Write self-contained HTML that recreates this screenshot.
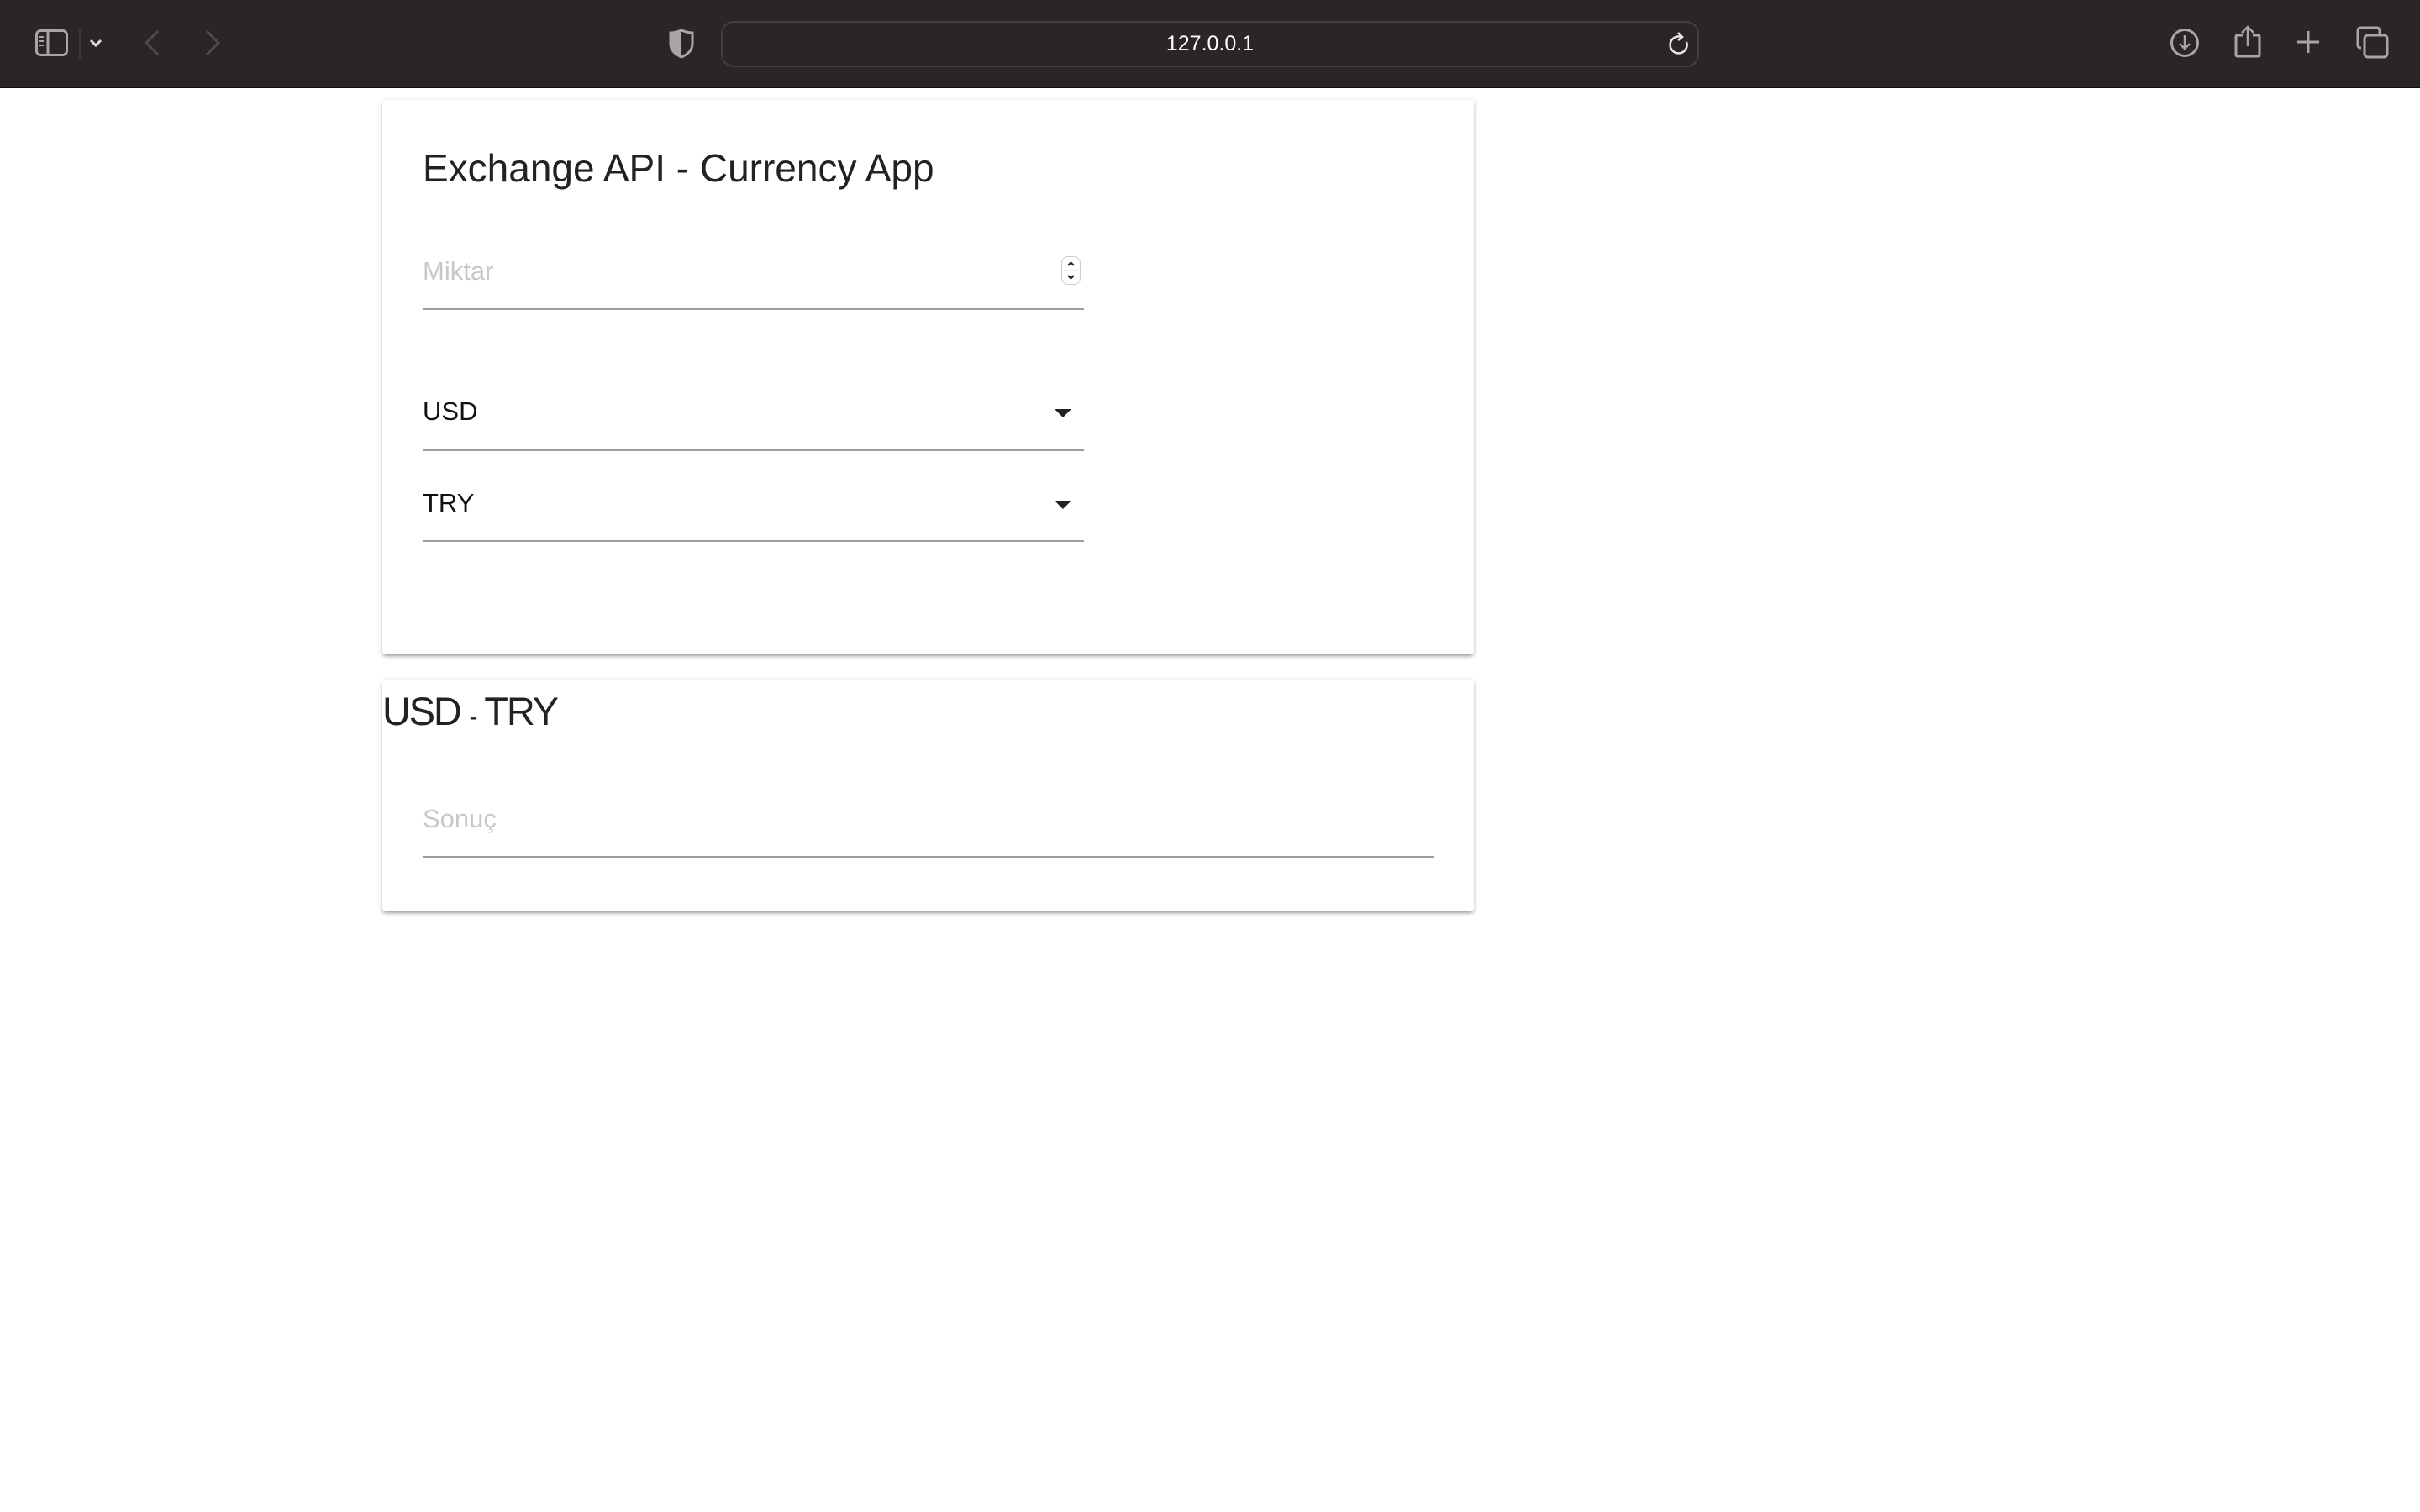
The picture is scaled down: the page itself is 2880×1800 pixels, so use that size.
<!DOCTYPE html>
<html><head><meta charset="utf-8"><style>
*{margin:0;padding:0;box-sizing:border-box}
html,body{width:2880px;height:1800px;background:#fff;overflow:hidden;font-family:"Liberation Sans",sans-serif}
.bar{position:absolute;left:0;top:0;width:2880px;height:105px;background:#2a2526;border-bottom:1px solid #111}
.url{position:absolute;left:858px;top:25px;width:1164px;height:55px;border:2px solid #433e3f;border-radius:15px;background:#2a2526}
.urltext{position:absolute;left:0;width:100%;top:39px;text-align:center;color:#fff;font-size:25px;line-height:26px}
svg{position:absolute}
.card{position:absolute;left:455px;width:1299px;background:#fff;border-radius:4px;box-shadow:0 3px 3px -2px rgba(0,0,0,.25),0 3px 4px 0 rgba(0,0,0,.14),0 1px 8px 0 rgba(0,0,0,.12)}
.t{position:absolute;color:#222;white-space:nowrap}
.line{position:absolute;height:2px;background:#9e9e9e}
.ph{position:absolute;color:#c8c8c8;font-size:31px;line-height:36px}
.val{position:absolute;color:#111;font-size:31px;line-height:36px}
.arr{position:absolute;width:0;height:0;border-left:10px solid transparent;border-right:10px solid transparent;border-top:10px solid #222}
</style></head><body>
<div class="bar">
<svg style="left:42px;top:35px" width="40" height="32" viewBox="0 0 40 32"><rect x="1.5" y="1.5" width="36" height="29" rx="5" fill="none" stroke="#aaa4a5" stroke-width="3"/><line x1="15" y1="2" x2="15" y2="30" stroke="#aaa4a5" stroke-width="3"/><line x1="5" y1="9" x2="10" y2="9" stroke="#aaa4a5" stroke-width="2"/><line x1="5" y1="14" x2="10" y2="14" stroke="#aaa4a5" stroke-width="2"/><line x1="5" y1="19" x2="10" y2="19" stroke="#aaa4a5" stroke-width="2"/></svg>
<div style="position:absolute;left:94px;top:34px;width:2px;height:36px;background:#3c3738"></div>
<svg style="left:105px;top:45px" width="18" height="12" viewBox="0 0 18 12"><path d="M3 3 L9 9 L15 3" fill="none" stroke="#ddd" stroke-width="3"/></svg>
<svg style="left:170px;top:35px" width="22" height="32" viewBox="0 0 22 32"><path d="M18 2 L4 16 L18 30" fill="none" stroke="#4e494a" stroke-width="3"/></svg>
<svg style="left:242px;top:35px" width="22" height="32" viewBox="0 0 22 32"><path d="M4 2 L18 16 L4 30" fill="none" stroke="#4e494a" stroke-width="3"/></svg>
<svg style="left:796px;top:34px" width="30" height="36" viewBox="0 0 30 36"><path d="M15 2 C10 4 6 5 2 5 L2 18 C2 26 8 31 15 34 C22 31 28 26 28 18 L28 5 C24 5 20 4 15 2 Z" fill="none" stroke="#aaa4a5" stroke-width="3"/><path d="M15 2 C10 4 6 5 2 5 L2 18 C2 26 8 31 15 34 Z" fill="#aaa4a5"/></svg>
<div class="url"></div>
<div class="urltext">127.0.0.1</div>
<svg style="left:1984px;top:36px" width="28" height="30" viewBox="0 0 28 30"><path d="M17 8 A10 10 0 1 0 23 14" fill="none" stroke="#e8e8e8" stroke-width="2.5"/><path d="M13 3 L18 8 L13 12" fill="none" stroke="#e8e8e8" stroke-width="2.5"/></svg>
<svg style="left:2582px;top:33px" width="36" height="36" viewBox="0 0 36 36"><circle cx="18" cy="18" r="15.5" fill="none" stroke="#aaa4a5" stroke-width="3"/><path d="M18 9 L18 25 M12 19 L18 25 L24 19" fill="none" stroke="#aaa4a5" stroke-width="2.5"/></svg>
<svg style="left:2658px;top:29px" width="34" height="40" viewBox="0 0 34 40"><path d="M11 13 L5 13 Q3 13 3 15 L3 36 Q3 38 5 38 L29 38 Q31 38 31 36 L31 15 Q31 13 29 13 L23 13" fill="none" stroke="#aaa4a5" stroke-width="3"/><path d="M17 26 L17 3 M10 10 L17 3 L24 10" fill="none" stroke="#aaa4a5" stroke-width="2.5"/></svg>
<svg style="left:2733px;top:36px" width="28" height="28" viewBox="0 0 28 28"><path d="M14 1 L14 27 M1 14 L27 14" stroke="#aaa4a5" stroke-width="3"/></svg>
<svg style="left:2804px;top:31px" width="40" height="40" viewBox="0 0 40 40"><path d="M6 26 Q2 26 2 22 L2 6 Q2 2 6 2 L24 2 Q28 2 28 6 L28 10" fill="none" stroke="#aaa4a5" stroke-width="3"/><rect x="10" y="11" width="27" height="26" rx="4" fill="none" stroke="#aaa4a5" stroke-width="3"/></svg>
</div>

<div class="card" style="top:119px;height:660px">
<div class="t" style="left:48px;top:51px;font-size:46px;line-height:60px">Exchange API - Currency App</div>
<div class="ph" style="left:48px;top:186px">Miktar</div>
<div style="position:absolute;left:808px;top:186px;width:23px;height:34px;border:1px solid #ccc;border-radius:8px;background:#fff"></div>
<svg style="left:808px;top:186px" width="23" height="34" viewBox="0 0 23 34"><line x1="2" y1="17" x2="21" y2="17" stroke="#ddd"/><path d="M8 11 L11.5 7.5 L15 11 M8 23 L11.5 26.5 L15 23" fill="none" stroke="#222" stroke-width="2"/></svg>
<div class="line" style="left:48px;top:248px;width:787px"></div>
<div class="val" style="left:48px;top:353px">USD</div>
<div class="arr" style="left:800px;top:368px"></div>
<div class="line" style="left:48px;top:416px;width:787px"></div>
<div class="val" style="left:48px;top:462px">TRY</div>
<div class="arr" style="left:800px;top:477px"></div>
<div class="line" style="left:48px;top:524px;width:787px"></div>
</div>

<div class="card" style="top:809px;height:276px">
<div class="t" style="left:0;top:8px;font-size:47px;line-height:60px;letter-spacing:-2.2px">USD <span style="font-size:30px">-</span> TRY</div>
<div class="ph" style="left:48px;top:148px">Sonuç</div>
<div class="line" style="left:48px;top:210px;width:1203px"></div>
</div>
</body></html>
